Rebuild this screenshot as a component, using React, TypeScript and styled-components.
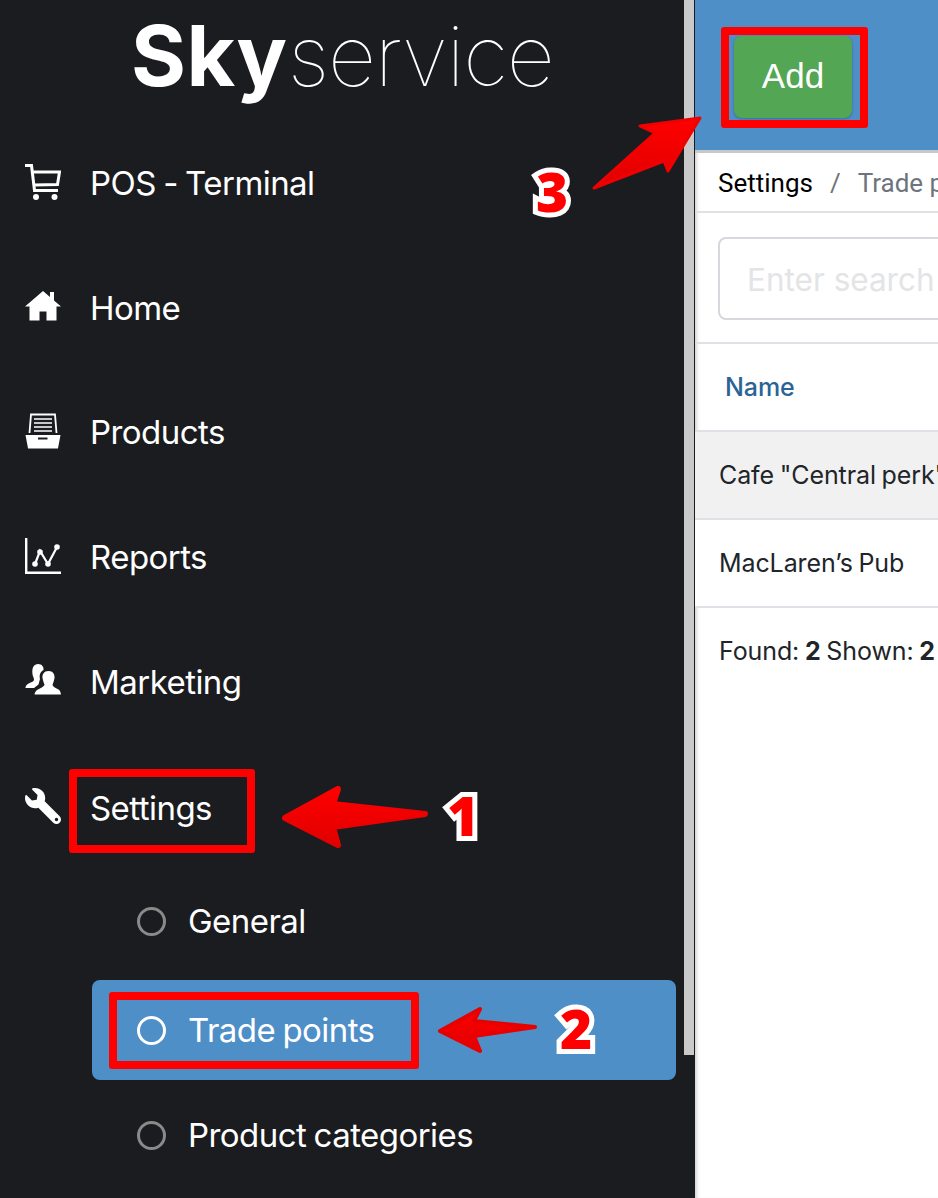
import React from "react";
import styled, { createGlobalStyle } from "styled-components";
import { FaWrench } from "react-icons/fa";

const Global = createGlobalStyle`
  html, body { margin: 0; padding: 0; background: #fff; }
  body { overflow: hidden; }
  * { box-sizing: border-box; }
`;

const Page = styled.div`
  position: relative;
  display: flex;
  width: 938px;
  height: 1198px;
  overflow: hidden;
  font-family: Inter, "Liberation Sans", sans-serif;
`;

const Sidebar = styled.aside`
  flex: 0 0 684px;
  height: 100%;
  background: #1b1c20;
  color: #fff;
`;

const Scrollbar = styled.div`
  flex: 0 0 11px;
  height: 100%;
  background: #1b1c20;
`;

const ScrollThumb = styled.div`
  width: 10px;
  height: 1055px;
  background: #c9c9c9;
`;

const Logo = styled.div`
  height: 121px;
  padding: 0 0 0 131px;
  font-size: 84px;
  line-height: 112px;
  white-space: nowrap;
`;

const LogoBold = styled.span`
  font-weight: 700;
  letter-spacing: 0.6px;
`;

const LogoThin = styled.span`
  font-weight: 100;
  letter-spacing: -1.3px;
`;

const MenuRow = styled.div<{ $nudge?: boolean }>`
  height: 124.6px;
  margin-top: ${(p) => (p.$nudge ? "1.5px" : "0")};
  padding-left: 25px;
  display: flex;
  align-items: center;
  gap: 30px;
  font-size: 33px;
  letter-spacing: -0.55px;
  word-spacing: -1.4px;
  svg { flex: 0 0 36px; width: 36px; height: 36px; margin-top: -3px; margin-right: -1px; }
`;

const SubList = styled.div`
  padding: 1px 8px 0 92px;
`;

const SubRow = styled.div<{ $active?: boolean }>`
  height: 100px;
  margin: ${(p) => (p.$active ? "9px 0 5px" : "0")};
  padding-left: 45px;
  display: flex;
  align-items: center;
  gap: 23px;
  border-radius: 8px;
  font-size: 33px;
  letter-spacing: -0.55px;
  word-spacing: -1.4px;
  background: ${(p) => (p.$active ? "#4f8fc8" : "transparent")};
`;

const Dot = styled.span<{ $active?: boolean }>`
  flex: 0 0 29px;
  height: 29px;
  margin-right: -1px;
  border-radius: 50%;
  border: 3.5px solid ${(p) => (p.$active ? "#fff" : "#8a8a8a")};
`;

const Main = styled.main`
  flex: 1;
  min-width: 0;
  height: 100%;
  background: #fff;
  box-shadow: inset 4px 0 4px -3px rgba(0, 0, 0, 0.25);
  color: #212529;
  font-size: 25px;
  letter-spacing: -0.1px;
  word-spacing: -1.2px;
  white-space: nowrap;
`;

const Header = styled.header`
  height: 153px;
  padding: 36px 0 0 39px;
  background: #4f8fc8;
  border-bottom: 3px solid #c8c8c8;
`;

const AddButton = styled.button`
  display: block;
  width: 118px;
  height: 82px;
  padding-bottom: 3px;
  border: 0;
  border-radius: 8px;
  background: #53a653;
  color: #fff;
  font-family: "Liberation Sans", sans-serif;
  font-size: 35px;
  box-shadow: 0 1px 3px rgba(0, 0, 0, 0.25);
`;

const Breadcrumb = styled.nav`
  height: 60px;
  padding: 2px 0 0 23px;
  display: flex;
  align-items: center;
  gap: 17px;
  border-bottom: 2px solid #dfe1e4;
  color: #000;
  font-family: Roboto, "Liberation Sans", sans-serif;
  font-size: 26px;
  letter-spacing: 0;
  word-spacing: 0;
`;

const CrumbDim = styled.span`
  color: #6c757d;
`;

const SearchWrap = styled.div`
  height: 131px;
  padding: 24px 0 0 23px;
  border-bottom: 2px solid #dee2e6;
`;

const SearchBox = styled.div`
  width: 300px;
  height: 83px;
  padding: 1px 0 0 27px;
  display: flex;
  align-items: center;
  border: 2px solid #d5d8dc;
  border-radius: 8px;
  color: #e3e4e6;
  font-size: 31.5px;
  letter-spacing: 0;
  word-spacing: 0;
`;

const HeadCell = styled.div`
  height: 88px;
  padding-left: 30px;
  display: flex;
  align-items: center;
  border-bottom: 2px solid #dee2e6;
  color: #2a6496;
  font-weight: 500;
  font-size: 25px;
`;

const Row = styled.div<{ $shade?: boolean }>`
  height: 88px;
  padding-left: 24px;
  display: flex;
  align-items: center;
  border-bottom: 2px solid #dee2e6;
  background: ${(p) => (p.$shade ? "#f1f1f1" : "#fff")};
`;

const Footer = styled.div`
  padding: 28px 0 0 24px;
  b { font-weight: 700; }
`;

const Highlight = styled.div<{ $x: number; $y: number; $w: number; $h: number }>`
  position: absolute;
  left: ${(p) => p.$x}px;
  top: ${(p) => p.$y}px;
  width: ${(p) => p.$w}px;
  height: ${(p) => p.$h}px;
  border: 8px solid #fe0000;
  border-radius: 3px;
`;

const Step = styled.div<{ $x: number; $y: number }>`
  position: absolute;
  left: ${(p) => p.$x}px;
  top: ${(p) => p.$y}px;
  font-family: "Open Sans", sans-serif;
  font-weight: 800;
  font-size: 55px;
  line-height: 55px;
  color: #fe0000;
  -webkit-text-stroke: 10px #fff;
  stroke-linejoin: round;
  paint-order: stroke fill;
`;

const Overlay = styled.svg`
  position: absolute;
  left: 0;
  top: 0;
  width: 938px;
  height: 1198px;
  pointer-events: none;
`;

const CartIcon = () => (
  <svg viewBox="0 0 36 36" fill="none" stroke="#fff" strokeWidth="3">
    <path d="M0 1.500h6.500L9.500 26.500H33" />
    <path d="M7.500 8H34.500L32.500 20.500L9 21" />
    <circle cx="11" cy="33" r="3" fill="#fff" stroke="none" />
    <circle cx="29.500" cy="33" r="3" fill="#fff" stroke="none" />
  </svg>
);

const HomeIcon = () => (
  <svg viewBox="0 0 36 36" fill="#fff">
    <path d="M0 18.500L18 3L25 9V4H29V12.500L36 18.500H31.500V32.500H21.500V23.500H14.500V32.500H4.500V18.500Z" />
  </svg>
);

const ProductsIcon = () => (
  <svg viewBox="0 0 36 36" fill="none" stroke="#fff" strokeWidth="1.800">
    <path d="M4.500 20L6 1.500H30L31.500 20" />
    <path d="M9 6H27M9 10H27M9 14H27M9 18H27" strokeWidth="1.600" />
    <path d="M0.500 22H35.500L33 35.500H3Z" fill="#fff" stroke="none" />
    <path d="M13 25.500H22.500" stroke="#1b1c20" strokeWidth="2" />
  </svg>
);

const ReportsIcon = () => (
  <svg viewBox="0 0 36 36" fill="none" stroke="#fff">
    <path d="M1.200 0V34.700H36" strokeWidth="2.400" />
    <path d="M10 26L15 13L23 26L32 9" strokeWidth="2.200" />
    <circle cx="10" cy="26" r="2.800" fill="#fff" stroke="none" />
    <circle cx="15" cy="14" r="2.800" fill="#fff" stroke="none" />
    <circle cx="23" cy="26" r="2.800" fill="#fff" stroke="none" />
    <circle cx="32" cy="9" r="2.800" fill="#fff" stroke="none" />
  </svg>
);

const MarketingIcon = () => (
  <svg viewBox="0 0 36 36" fill="#fff">
    <path d="M13 2C17 2 19 5 18.500 8C15.500 9.500 14 13 15 17L13.500 22.500L9 26H0.500C0.500 23 3 21.500 7 20C9 19 9.500 17.500 8.500 15.500C6.500 11 6.500 2 13 2Z" />
    <path d="M23.500 9C28 9 30 12.500 29.500 16C29 19 28 21 27.500 23C28 25 31 26 33.500 27.500C35 28.500 35.500 30 36 32.500H9.500C10 30 11 28.500 13 27.500C15.500 26 18.500 25 19.500 23C19 21 18 19 17.500 16C17 12.500 19 9 23.500 9Z" />
  </svg>
);

const Wrench = styled(FaWrench)`
  transform: scaleX(-1);
`;

export default function App() {
  return (
    <Page>
      <Global />
      <Sidebar>
        <Logo>
          <LogoBold>Sky</LogoBold>
          <LogoThin>service</LogoThin>
        </Logo>
        <MenuRow><CartIcon />POS - Terminal</MenuRow>
        <MenuRow><HomeIcon />Home</MenuRow>
        <MenuRow><ProductsIcon />Products</MenuRow>
        <MenuRow><ReportsIcon />Reports</MenuRow>
        <MenuRow><MarketingIcon />Marketing</MenuRow>
        <MenuRow $nudge><Wrench />Settings</MenuRow>
        <SubList>
          <SubRow><Dot />General</SubRow>
          <SubRow $active><Dot $active />Trade points</SubRow>
          <SubRow><Dot />Product categories</SubRow>
        </SubList>
      </Sidebar>
      <Scrollbar><ScrollThumb /></Scrollbar>
      <Main>
        <Header><AddButton>Add</AddButton></Header>
        <Breadcrumb>
          <span>Settings</span>
          <CrumbDim>/</CrumbDim>
          <CrumbDim>Trade points</CrumbDim>
        </Breadcrumb>
        <SearchWrap><SearchBox>Enter search</SearchBox></SearchWrap>
        <HeadCell>Name</HeadCell>
        <Row $shade>Cafe "Central perk"</Row>
        <Row>MacLaren’s Pub</Row>
        <Footer>Found: <b>2</b> Shown: <b>2</b></Footer>
      </Main>

      <Highlight $x={69} $y={769} $w={186} $h={84} />
      <Highlight $x={109} $y={992} $w={310} $h={77} />
      <Highlight $x={721} $y={27} $w={147} $h={101} />

      <Overlay viewBox="0 0 938 1198">
        <defs>
          <linearGradient id="arrowRed" x1="0" y1="0" x2="0" y2="1">
            <stop offset="0" stopColor="#ff0000" />
            <stop offset="1" stopColor="#e00000" />
          </linearGradient>
        </defs>
        <path d="M285 818L338 789L333 804L425 814L333 827L338 845Z" fill="url(#arrowRed)" stroke="url(#arrowRed)" strokeWidth="6" strokeLinejoin="round" />
        <path d="M440 1031L480 1009L474 1021L535 1027L474 1036L480 1051Z" fill="url(#arrowRed)" stroke="#e80000" strokeWidth="4" strokeLinejoin="round" />
        <path d="M700 118L640 126L655 133L594 188L664 161L668 171Z" fill="url(#arrowRed)" stroke="#f00000" strokeWidth="3" strokeLinejoin="round" />
      </Overlay>

      <Step $x={447} $y={787}>1</Step>
      <Step $x={560} $y={1000}>2</Step>
      <Step $x={536} $y={163}>3</Step>
    </Page>
  );
}
